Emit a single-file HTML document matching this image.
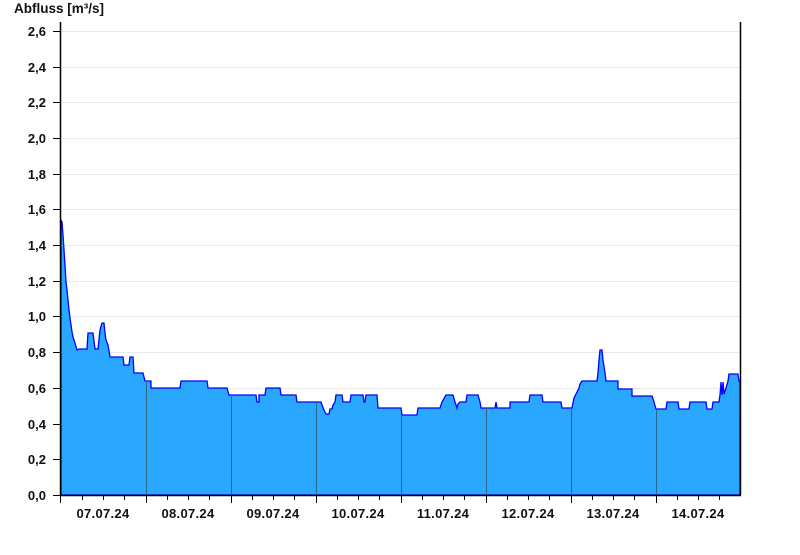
<!DOCTYPE html>
<html><head><meta charset="utf-8"><style>
html,body{margin:0;padding:0;background:#fff;}
svg text{font-family:"Liberation Sans",Arial,sans-serif;font-weight:bold;font-size:13px;fill:#111;}
</style></head><body>
<svg width="800" height="550" viewBox="0 0 800 550" xmlns="http://www.w3.org/2000/svg">
<text x="14" y="13" style="font-size:13.5px">Abfluss [m³/s]</text>
<g stroke="#e8e8e8" stroke-width="1">
<line x1="61" x2="740" y1="31.5" y2="31.5"/><line x1="61" x2="740" y1="67.5" y2="67.5"/>
<line x1="61" x2="740" y1="102.5" y2="102.5"/><line x1="61" x2="740" y1="138.5" y2="138.5"/>
<line x1="61" x2="740" y1="174.5" y2="174.5"/><line x1="61" x2="740" y1="209.5" y2="209.5"/>
<line x1="61" x2="740" y1="245.5" y2="245.5"/><line x1="61" x2="740" y1="281.5" y2="281.5"/>
<line x1="61" x2="740" y1="316.5" y2="316.5"/><line x1="61" x2="740" y1="352.5" y2="352.5"/>
<line x1="61" x2="740" y1="388.5" y2="388.5"/><line x1="61" x2="740" y1="424.5" y2="424.5"/>
<line x1="61" x2="740" y1="459.5" y2="459.5"/>
</g>
<polygon fill="#2aa8ff" stroke="#0000ff" stroke-width="1.3" stroke-linejoin="miter" points="
61,495 61,220 62,222 63,235 64,250 65,265 66,282 67,290 68,300 69,310 70,318 71,325 72,332 73,337 75,343 77,350 79,349 81,349 81,349 87,349 88,333 93,333 95,349 98,349 100,330 102,323 104,323 105,333 106,340 108,345 110,357 123,357 124,365 129,365 130,357 133,357 134,373 143,373 145,381 151,381 151,388 180,388 181,381 207,381 208,388 227,388 229,395 256,395 257,402 259,402 259,395 265,395 266,388 280,388 281,395 296,395 297,402 321,402 322,405 324,410 326,414 329,414 330,409 332,409 333,405 335,402 336,395 342,395 343,402 350,402 351,395 363,395 364,402 365,402 366,395 377,395 378,408 401,408 402,415 417,415 418,408 440,408 441,405 442,402 446,395 453,395 455,402 457,408 458,404 460,402 466,402 467,395 478,395 480,402 481,408 495,408 496,402 497,408 510,408 510,402 529,402 530,395 542,395 543,402 561,402 562,408 572,408 574,398 577,392 579,388 580,384 582,381 597,381 598,373 599,360 600,350 602,350 603,360 605,373 606,381 618,381 618,389 632,389 632,396 652,396 654,402 656,409 666,409 667,402 678,402 679,409 689,409 690,402 706,402 707,409 712,409 713,402 719,402 720,395 721,382 722,395 723,382 724,394 726,388 728,381 729,374 738,374 739,381 740,381 740,495"/>
<g stroke="#2a6590" stroke-width="1">
<line x1="146.5" x2="146.5" y1="381" y2="495"/><line x1="231.5" x2="231.5" y1="395" y2="495"/>
<line x1="316.5" x2="316.5" y1="402" y2="495"/><line x1="401.5" x2="401.5" y1="415" y2="495"/>
<line x1="486.5" x2="486.5" y1="408" y2="495"/><line x1="571.5" x2="571.5" y1="408" y2="495"/>
<line x1="656.5" x2="656.5" y1="409" y2="495"/>
</g>
<g stroke="#000" stroke-width="1.5">
<line x1="60.5" x2="60.5" y1="22" y2="495"/>
<line x1="740.5" x2="740.5" y1="22" y2="495"/>
<line x1="60" x2="741" y1="495.5" y2="495.5"/>
</g>
<g stroke="#000" stroke-width="1">
<line x1="53" x2="60" y1="31.5" y2="31.5"/><line x1="53" x2="60" y1="67.5" y2="67.5"/>
<line x1="53" x2="60" y1="102.5" y2="102.5"/><line x1="53" x2="60" y1="138.5" y2="138.5"/>
<line x1="53" x2="60" y1="174.5" y2="174.5"/><line x1="53" x2="60" y1="209.5" y2="209.5"/>
<line x1="53" x2="60" y1="245.5" y2="245.5"/><line x1="53" x2="60" y1="281.5" y2="281.5"/>
<line x1="53" x2="60" y1="316.5" y2="316.5"/><line x1="53" x2="60" y1="352.5" y2="352.5"/>
<line x1="53" x2="60" y1="388.5" y2="388.5"/><line x1="53" x2="60" y1="424.5" y2="424.5"/>
<line x1="53" x2="60" y1="459.5" y2="459.5"/><line x1="53" x2="60" y1="495.5" y2="495.5"/>
</g>
<g stroke="#000" stroke-width="1">
<line x1="60.5" x2="60.5" y1="495" y2="503"/><line x1="82.5" x2="82.5" y1="495" y2="500"/><line x1="103.5" x2="103.5" y1="495" y2="500"/><line x1="124.5" x2="124.5" y1="495" y2="500"/>
<line x1="146.5" x2="146.5" y1="495" y2="503"/><line x1="167.5" x2="167.5" y1="495" y2="500"/><line x1="188.5" x2="188.5" y1="495" y2="500"/><line x1="209.5" x2="209.5" y1="495" y2="500"/>
<line x1="231.5" x2="231.5" y1="495" y2="503"/><line x1="252.5" x2="252.5" y1="495" y2="500"/><line x1="273.5" x2="273.5" y1="495" y2="500"/><line x1="294.5" x2="294.5" y1="495" y2="500"/>
<line x1="316.5" x2="316.5" y1="495" y2="503"/><line x1="337.5" x2="337.5" y1="495" y2="500"/><line x1="358.5" x2="358.5" y1="495" y2="500"/><line x1="379.5" x2="379.5" y1="495" y2="500"/>
<line x1="401.5" x2="401.5" y1="495" y2="503"/><line x1="422.5" x2="422.5" y1="495" y2="500"/><line x1="443.5" x2="443.5" y1="495" y2="500"/><line x1="464.5" x2="464.5" y1="495" y2="500"/>
<line x1="486.5" x2="486.5" y1="495" y2="503"/><line x1="507.5" x2="507.5" y1="495" y2="500"/><line x1="528.5" x2="528.5" y1="495" y2="500"/><line x1="549.5" x2="549.5" y1="495" y2="500"/>
<line x1="571.5" x2="571.5" y1="495" y2="503"/><line x1="592.5" x2="592.5" y1="495" y2="500"/><line x1="613.5" x2="613.5" y1="495" y2="500"/><line x1="634.5" x2="634.5" y1="495" y2="500"/>
<line x1="656.5" x2="656.5" y1="495" y2="503"/><line x1="677.5" x2="677.5" y1="495" y2="500"/><line x1="698.5" x2="698.5" y1="495" y2="500"/><line x1="719.5" x2="719.5" y1="495" y2="500"/>
</g>
<g text-anchor="end">
<text x="46" y="36">2,6</text><text x="46" y="72">2,4</text><text x="46" y="107">2,2</text>
<text x="46" y="143">2,0</text><text x="46" y="179">1,8</text><text x="46" y="214">1,6</text>
<text x="46" y="250">1,4</text><text x="46" y="286">1,2</text><text x="46" y="321">1,0</text>
<text x="46" y="357">0,8</text><text x="46" y="393">0,6</text><text x="46" y="429">0,4</text>
<text x="46" y="464">0,2</text><text x="46" y="500">0,0</text>
</g>
<g text-anchor="middle" style="letter-spacing:0.3px">
<text x="103" y="518">07.07.24</text><text x="188" y="518">08.07.24</text>
<text x="273" y="518">09.07.24</text><text x="358" y="518">10.07.24</text>
<text x="443" y="518">11.07.24</text><text x="528" y="518">12.07.24</text>
<text x="613" y="518">13.07.24</text><text x="698" y="518">14.07.24</text>
</g>
</svg>
</body></html>
